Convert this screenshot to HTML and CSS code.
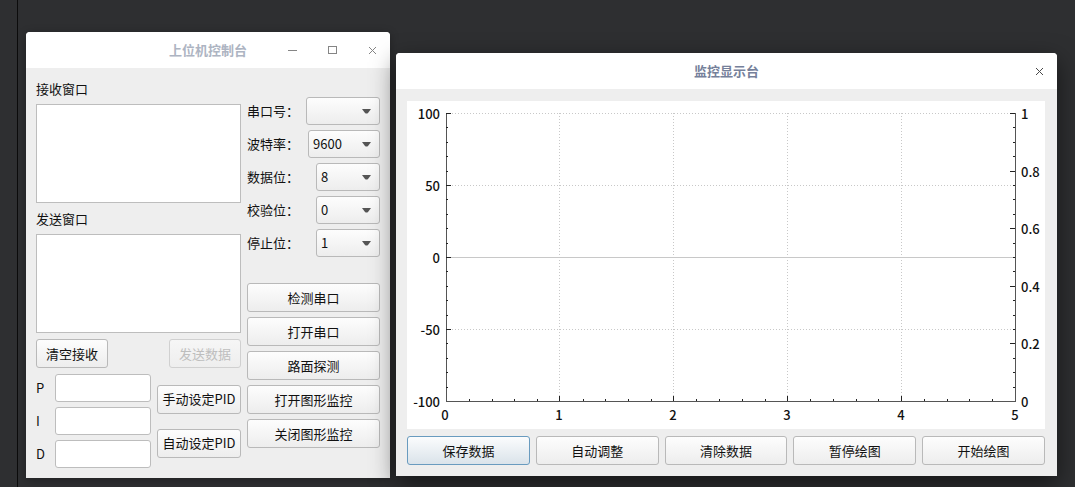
FILE: index.html
```html
<!DOCTYPE html>
<html lang="zh-CN">
<head>
<meta charset="utf-8">
<title>上位机控制台</title>
<link rel="stylesheet" href="styles.css">
</head>
<body>
<div class="edge"></div>
<main class="desktop">
  <section class="window console inactive">
    <header class="titlebar">
      <h1 class="title">上位机控制台</h1>
      <div class="controls">
        <button class="control" aria-label="最小化"><svg width="10" height="10"><path d="M1 5H10"/></svg></button>
        <button class="control" aria-label="最大化"><svg width="10" height="10"><path d="M1 1H9V8H1Z"/></svg></button>
        <button class="control" aria-label="关闭"><svg class="cross" width="10" height="10"><path d="M2 2L9 9M9 2L2 9"/></svg></button>
      </div>
    </header>
    <div class="console-body">
      <div class="io">
        <label class="caption" for="receive">接收窗口</label>
        <textarea class="box" id="receive"></textarea>
        <label class="caption" for="send">发送窗口</label>
        <textarea class="box" id="send"></textarea>
        <div class="io-actions">
          <button class="btn">清空接收</button>
          <button class="btn" disabled>发送数据</button>
        </div>
        <div class="pid">
          <div class="pid-fields">
            <label for="p">P</label><input class="field" id="p" type="text">
            <label for="i">I</label><input class="field" id="i" type="text">
            <label for="d">D</label><input class="field" id="d" type="text">
          </div>
          <div class="pid-actions">
            <button class="btn snug">手动设定PID</button>
            <button class="btn snug">自动设定PID</button>
          </div>
        </div>
      </div>
      <div class="side">
        <div class="settings">
          <div class="setting"><label for="port">串口号：</label><select class="select wide" id="port"><option></option></select></div>
          <div class="setting"><label for="baud">波特率：</label><select class="select medium" id="baud"><option>9600</option></select></div>
          <div class="setting"><label for="data">数据位：</label><select class="select" id="data"><option>8</option></select></div>
          <div class="setting"><label for="parity">校验位：</label><select class="select" id="parity"><option>0</option></select></div>
          <div class="setting"><label for="stop">停止位：</label><select class="select" id="stop"><option>1</option></select></div>
        </div>
        <div class="side-actions">
          <button class="btn">检测串口</button>
          <button class="btn">打开串口</button>
          <button class="btn">路面探测</button>
          <button class="btn">打开图形监控</button>
          <button class="btn">关闭图形监控</button>
        </div>
      </div>
    </div>
  </section>

  <section class="window monitor">
    <header class="titlebar">
      <h2 class="title">监控显示台</h2>
      <div class="controls">
        <button class="control" aria-label="关闭"><svg class="cross" width="10" height="10"><path d="M2 2L9 9M9 2L2 9"/></svg></button>
      </div>
    </header>
    <div class="monitor-body">
      <svg class="chart" viewBox="0 0 638 328" role="img" aria-label="监控曲线">
        <path class="grid" d="M39 12H608M39 84H608M39 228H608M152 12V300M266 12V300M380 12V300M494 12V300"/>
        <path class="zero" d="M39 156H608"/>
        <path class="axis" d="M39 12V300H608V12"/>
        <path class="tick" d="M39 12h5M39 84h5M39 156h5M39 228h5M608 12h-5M608 70h-5M608 127h-5M608 185h-5M608 242h-5M152 300v-5M266 300v-5M380 300v-5M494 300v-5"/>
        <path class="tick" d="M39 26h2M39 41h2M39 55h2M39 70h2M39 98h2M39 113h2M39 127h2M39 142h2M39 170h2M39 185h2M39 199h2M39 214h2M39 242h2M39 257h2M39 271h2M39 286h2"/>
        <path class="tick" d="M608 26h-2M608 41h-2M608 55h-2M608 84h-2M608 98h-2M608 113h-2M608 142h-2M608 156h-2M608 170h-2M608 199h-2M608 214h-2M608 228h-2M608 257h-2M608 271h-2M608 286h-2"/>
        <path class="tick" d="M62 300v-2M85 300v-2M107 300v-2M130 300v-2M176 300v-2M198 300v-2M221 300v-2M244 300v-2M289 300v-2M312 300v-2M335 300v-2M358 300v-2M403 300v-2M426 300v-2M449 300v-2M471 300v-2M517 300v-2M540 300v-2M562 300v-2M585 300v-2"/>
        <g class="left">
          <text x="33" y="18">100</text><text x="33" y="90">50</text><text x="33" y="162">0</text><text x="33" y="234">-50</text><text x="33" y="306">-100</text>
        </g>
        <g class="right">
          <text x="614" y="18">1</text><text x="614" y="76">0.8</text><text x="614" y="133">0.6</text><text x="614" y="191">0.4</text><text x="614" y="248">0.2</text><text x="614" y="306">0</text>
        </g>
        <g class="bottom">
          <text x="38" y="319">0</text><text x="152" y="319">1</text><text x="266" y="319">2</text><text x="380" y="319">3</text><text x="494" y="319">4</text><text x="608" y="319">5</text>
        </g>
      </svg>
      <div class="monitor-actions">
        <button class="btn primary">保存数据</button>
        <button class="btn">自动调整</button>
        <button class="btn">清除数据</button>
        <button class="btn">暂停绘图</button>
        <button class="btn">开始绘图</button>
      </div>
    </div>
  </section>
</main>
</body>
</html>
```
FILE: styles.css
```css
* { box-sizing: border-box; }

body {
  margin: 0;
  min-height: 100vh;
  display: flex;
  background: #2e2f31;
  color: #111;
  font: 13px/20px "Noto Sans CJK SC", sans-serif;
}

button, input, textarea, select { font: inherit; color: inherit; margin: 0; }

.edge { flex: 0 0 18px; border-right: 1px solid #0c0c0c; }

.desktop {
  flex: 1;
  display: flex;
  gap: 6px;
  padding: 32px 18px 9px 8px;
}

.window {
  display: flex;
  flex-direction: column;
  background: #eee;
  border-radius: 4px 4px 0 0;
  box-shadow: 0 8px 24px rgba(0, 0, 0, .55);
}
.console { flex: none; box-shadow: 0 2px 10px rgba(0, 0, 0, .3); }
.monitor { flex: 1; margin: 21px 0 2px; }

.titlebar {
  flex: 0 0 36px;
  display: grid;
  grid-template-columns: 1fr auto 1fr;
  align-items: center;
  padding-right: 8px;
  padding-left: 8px;
  background: #fff;
  border-radius: 4px 4px 0 0;
}
.title { grid-column: 2; margin: 0; font-size: 13px; font-weight: 700; color: #75809a; }
.inactive .title { color: #adb4c2; }
.controls { display: flex; justify-content: flex-end; gap: 20px; }
.control {
  width: 20px;
  height: 20px;
  padding: 0;
  border: 0;
  background: none;
  display: grid;
  place-items: center;
}
.control svg { fill: none; stroke: #4a4a4a; shape-rendering: crispEdges; }
.inactive .control svg { stroke: #858585; }
.control .cross { shape-rendering: auto; }

.console-body { flex: 1; display: flex; gap: 6px; padding: 11px 10px 10px; }
.io { width: 205px; display: flex; flex-direction: column; }
.box {
  flex: 1;
  min-height: 60px;
  margin: 5px 0 6px;
  border: 1px solid #bdbdbd;
  background: #fff;
  resize: none;
}
.io-actions { display: flex; justify-content: space-between; margin-bottom: 6px; }

.btn {
  height: 29px;
  padding: 0 8px;
  border: 1px solid #b9b9b9;
  border-radius: 3px;
  background: linear-gradient(#fdfdfd, #ededed);
  white-space: nowrap;
}
.io-actions .btn { width: 72px; }
.btn:disabled { color: #bebebe; border-color: #d0d0d0; background: linear-gradient(#f6f6f6, #eee); }
.btn.snug { padding: 0 3px; }
.btn.primary { border-color: #699bbf; background: linear-gradient(#fbfcfd, #dae3ea); }

.pid { display: flex; gap: 6px; }
.pid-fields {
  flex: 1;
  display: grid;
  grid-template-columns: 13px 1fr;
  gap: 5px 6px;
  align-items: center;
}
.field {
  width: 100%;
  min-width: 0;
  height: 28px;
  padding: 0 4px;
  border: 1px solid #bdbdbd;
  border-radius: 3px;
  background: #fff;
}
.pid-actions { width: 84px; display: flex; flex-direction: column; justify-content: center; gap: 15px; }

.side {
  width: 133px;
  display: flex;
  flex-direction: column;
  justify-content: space-between;
  padding: 18px 0 20px;
}
.settings, .side-actions { display: grid; gap: 5px; }
.setting { display: flex; justify-content: space-between; align-items: center; white-space: nowrap; }
.select {
  appearance: none;
  width: 64px;
  height: 28px;
  padding: 0 4px;
  border: 1px solid #b9b9b9;
  border-radius: 3px;
  background:
    url("data:image/svg+xml,%3Csvg xmlns='http://www.w3.org/2000/svg' width='9' height='5'%3E%3Cpath d='M0 0H9L6 4Q4.500 5 3 4Z' fill='%23555'/%3E%3C/svg%3E") no-repeat right 8px center,
    linear-gradient(#fdfdfd, #ededed);
}
.select.medium { width: 72px; }
.select.wide { width: 74px; }

.monitor-body { flex: 1; display: flex; flex-direction: column; gap: 7px; padding: 12px 12px 11px 11px; }
.chart { flex: 1 1 0; width: 100%; min-height: 200px; background: #fff; }
.chart path { fill: none; stroke-width: 1; shape-rendering: crispEdges; }
.chart .grid { stroke: #c8c8c8; stroke-dasharray: 1 2; }
.chart .zero { stroke: #c8c8c8; }
.chart .axis { stroke: #555; }
.chart .tick { stroke: #222; }
.chart text { font-size: 13px; font-weight: 500; fill: #111; }
.left { text-anchor: end; }
.bottom { text-anchor: middle; }
.monitor-actions { display: grid; grid-template-columns: repeat(5, 1fr); gap: 6px; }
```
